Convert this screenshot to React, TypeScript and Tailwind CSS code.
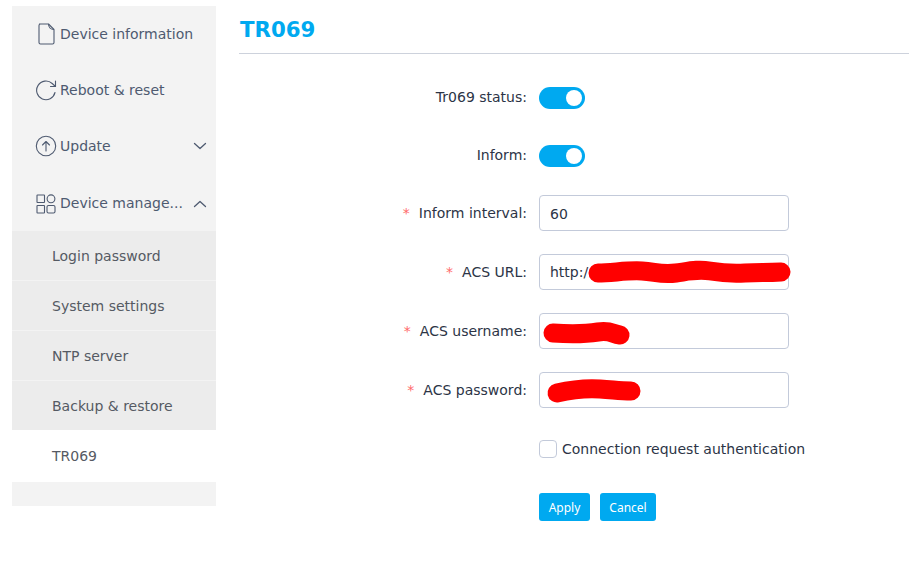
import React from "react";

const font = { fontFamily: '"DejaVu Sans", sans-serif' };

function Top({ icon, label, chevron, h }: { icon: React.ReactNode; label: string; chevron?: "up" | "down"; h: string }) {
  return (
    <div className={`flex items-center bg-[#f3f3f3] pl-[23px] pr-[9px] text-[14px] text-[#4e5a70] ${h}`}>
      <span className="flex h-[24px] w-[25px] shrink-0 items-center justify-start">{icon}</span>
      <span className="flex-1 whitespace-nowrap">{label}</span>
      {chevron && (
        <svg width="14" height="14" viewBox="0 0 14 14" fill="none" stroke="#4e5a70" strokeWidth="1.3" strokeLinecap="round" strokeLinejoin="round">
          {chevron === "down" ? <path d="M1.5 4.5 7 9.5l5.5-5" /> : <path d="M1.5 9.5 7 4.5l5.5 5" />}
        </svg>
      )}
    </div>
  );
}

function Sub({ label, active }: { label: string; active?: boolean }) {
  return (
    <div className={`flex items-center pl-[40px] pt-px text-[14px] text-[#555a63] ${active ? "h-[52px] bg-white" : "h-[49px] bg-[#ececec]"}`}>
      {label}
    </div>
  );
}

function Label({ text, required, lift }: { text: string; required?: boolean; lift?: boolean }) {
  return (
    <div className={`w-[300px] shrink-0 pr-[12px] text-right text-[14px] leading-[20px] text-[#2c3446] ${lift ? "mb-[2px]" : ""}`}>
      {required && <span className="mr-[9px] text-[#ff6a6a]">*</span>}
      {text}
    </div>
  );
}

function Toggle() {
  return (
    <div className="flex h-[22px] w-[46px] items-center justify-end rounded-full bg-[#00a9f0] pr-[3px]">
      <div className="h-[16px] w-[16px] rounded-full bg-white" />
    </div>
  );
}

function Field({ value, scribble, drop }: { value?: string; scribble?: React.ReactNode; drop?: boolean }) {
  return (
    <div className={`relative flex h-[36px] w-[250px] items-center rounded-[4px] border border-[#c3cada] bg-white pl-[10px] text-[14px] text-[#2c3446] ${drop ? "pt-[2px]" : ""}`}>
      {value}
      {scribble}
    </div>
  );
}

function Scribble({ d }: { d: string }) {
  return (
    <svg className="absolute left-0 top-0 overflow-visible" width="250" height="34" viewBox="0 0 250 34" fill="none">
      <path d={d} stroke="#ff0000" strokeWidth="19" strokeLinecap="round" strokeLinejoin="round" />
    </svg>
  );
}

export default function App() {
  return (
    <div className="flex h-[566px] w-[909px] overflow-hidden bg-white" style={font}>
      <aside className="ml-[12px] mt-[6px] flex h-[500px] w-[204px] shrink-0 flex-col bg-[#f3f3f3]">
        <Top
          h="h-[55px] mb-px pt-px"
          label="Device information"
          icon={
            <svg width="22" height="24" viewBox="0 0 22 24" fill="none" stroke="#4e5a70" strokeWidth="1.1" strokeLinejoin="round">
              <path d="M4 2h9.500c0 3 2 5.500 5.500 5.500V20.500a1.500 1.500 0 0 1-1.500 1.500h-12A1.500 1.500 0 0 1 4 20.500V3.500A1.500 1.500 0 0 1 5.500 2" />
              <path d="M13.500 2 19 7.500" />
            </svg>
          }
        />
        <Top
          h="h-[55px] mb-px pt-px"
          label="Reboot & reset"
          icon={
            <svg width="22" height="22" viewBox="0 0 22 22" fill="none" stroke="#4e5a70" strokeWidth="1.1" strokeLinecap="round" strokeLinejoin="round">
              <path d="M20 13.500A9.300 9.300 0 1 1 17.200 4.500L20.500 7.500" />
              <path d="M20.500 2V7.500h-5" />
            </svg>
          }
        />
        <Top
          h="h-[56px] mb-px"
          label="Update"
          chevron="down"
          icon={
            <svg width="22" height="22" viewBox="0 0 22 22" fill="none" stroke="#4e5a70" strokeWidth="1.1" strokeLinecap="round" strokeLinejoin="round">
              <circle cx="11" cy="11" r="9.700" />
              <path d="M11 16V6.500M7.500 10 11 6.500l3.500 3.500" />
            </svg>
          }
        />
        <Top
          h="h-[56px] pt-px"
          label="Device manage..."
          chevron="up"
          icon={
            <svg width="22" height="22" viewBox="0 0 22 22" fill="none" stroke="#4e5a70" strokeWidth="1.100">
              <rect x="2" y="2" width="7.500" height="7.500" rx="0.500" />
              <circle cx="16" cy="5.800" r="3.900" />
              <rect x="2" y="12.500" width="7.500" height="7.500" rx="0.500" />
              <rect x="12" y="12.500" width="8" height="7.500" rx="1.500" />
            </svg>
          }
        />
        <div className="flex flex-col gap-px">
          <Sub label="Login password" />
          <Sub label="System settings" />
          <Sub label="NTP server" />
          <Sub label="Backup & restore" />
        </div>
        <Sub label="TR069" active />
      </aside>

      <main className="ml-[23px] flex-1">
        <div className="h-[54px] border-b border-[#cdd2dc] pl-px pt-[14px] text-[21.3px] font-bold leading-[31px] text-[#00a9f0]">TR069</div>

        <div className="flex flex-col pt-[33px]">
          <div className="flex h-[22px] items-center"><Label text="Tr069 status:" lift /><Toggle /></div>
          <div className="mt-[36px] flex h-[22px] items-center"><Label text="Inform:" lift /><Toggle /></div>
          <div className="mt-[28px] flex h-[36px] items-center"><Label text="Inform interval:" required /><Field value="60" drop /></div>
          <div className="mt-[23px] flex h-[36px] items-center">
            <Label text="ACS URL:" required />
            <Field
              value="http:/"
              scribble={<Scribble d="M58 18C72 18 88 15 102 16S122 20 136 18 158 14 170 16 190 19 205 18 225 18 241 17" />}
            />
          </div>
          <div className="mt-[23px] flex h-[36px] items-center">
            <Label text="ACS username:" required />
            <Field scribble={<Scribble d="M13 19C30 20 45 20 58 18S72 20 80 21" />} />
          </div>
          <div className="mt-[23px] flex h-[36px] items-center">
            <Label text="ACS password:" required />
            <Field scribble={<Scribble d="M17 20C30 17 45 15 60 16S80 18 91 18" />} />
          </div>
          <div className="ml-[300px] mt-[31px] flex h-[20px] items-center gap-[5px]">
            <div className="h-[18px] w-[18px] rounded-[4px] border border-[#c3cada] bg-white" />
            <span className="whitespace-nowrap text-[14px] text-[#2c3446]">Connection request authentication</span>
          </div>
          <div className="ml-[300px] mt-[34px] flex gap-[10px]" style={{ fontFamily: '"Noto Sans", sans-serif' }}>
            <button className="h-[28px] w-[51px] rounded-[3px] bg-[#00a9f0] pt-px text-[12px] text-white">Apply</button>
            <button className="h-[28px] w-[56px] rounded-[3px] bg-[#00a9f0] pt-px text-[12px] text-white">Cancel</button>
          </div>
        </div>
      </main>
    </div>
  );
}
